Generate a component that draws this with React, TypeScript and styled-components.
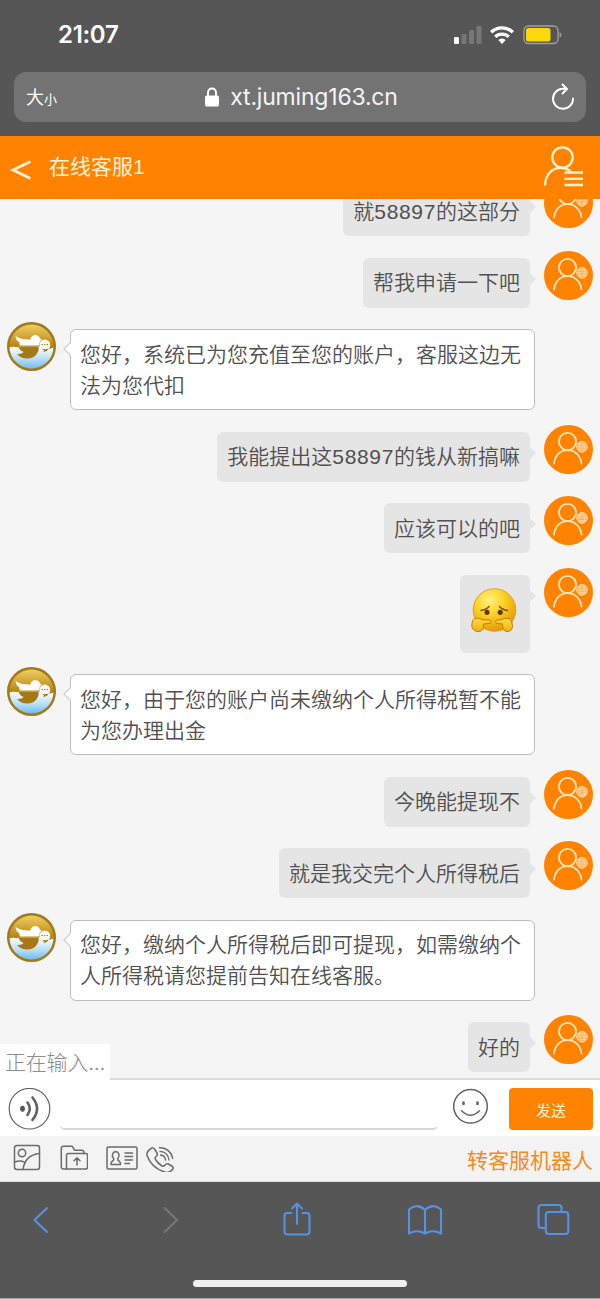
import React from "react";
import styled, { createGlobalStyle } from "styled-components";

const GlobalStyle = createGlobalStyle`
  * { box-sizing: border-box; }
  body { margin: 0; background: #565656; font-family: "Liberation Sans", "Noto Sans CJK SC", sans-serif; }
`;

const Screen = styled.div`
  display: flex;
  flex-direction: column;
  width: 600px;
  height: 1299px;
  overflow: hidden;
  background: #565656;
  border-bottom: 1px solid #a8a8a8;
`;

const StatusBar = styled.header`
  display: flex;
  align-items: center;
  flex: none;
  height: 72px;
  padding: 0 38px 3px 58px;
`;

const Clock = styled.time`
  flex: 1;
  padding-top: 1px;
  color: #fff;
  font: 600 24px/30px Inter, sans-serif;
  letter-spacing: -0.3px;
`;

const AddressBar = styled.div`
  display: flex;
  align-items: center;
  flex: none;
  height: 50px;
  margin: 0 14px 14px;
  padding: 0 11px 0 12px;
  border-radius: 12px;
  background: #737373;
  color: #fff;
`;

const TextSize = styled.span`
  width: 120px;
  font: 400 18px/30px "Noto Sans CJK SC", sans-serif;
  small { font-size: 13px; }
`;

const Address = styled.div`
  display: flex;
  flex: 1;
  justify-content: center;
  align-items: center;
  gap: 11px;
  padding-left: 2px;
  font: 400 23px/30px Inter, sans-serif;
  letter-spacing: -0.2px;
  color: #f4f4f4;
`;

const ReloadSlot = styled.span`
  display: flex;
  justify-content: flex-end;
  width: 120px;
`;

const TitleBar = styled.div`
  display: flex;
  align-items: center;
  flex: none;
  height: 63px;
  padding: 0 16px 1px 10px;
  background: #ff8300;
  color: #fff3dc;
`;

const Title = styled.h1`
  flex: 1;
  margin: 0 0 0 17px;
  font: 400 21px/30px "Liberation Sans", "Noto Sans CJK SC", sans-serif;
`;

const Messages = styled.main`
  display: flex;
  flex-direction: column;
  justify-content: flex-end;
  flex: none;
  gap: 14.5px;
  height: 879px;
  padding: 0 7px 6px;
  overflow: hidden;
  background: #f5f5f5;
`;

const Row = styled.div<{ $own?: boolean }>`
  display: flex;
  flex: none;
  flex-direction: ${(p) => (p.$own ? "row-reverse" : "row")};
  align-items: flex-start;
  gap: 14px;
`;

const Avatar = styled.svg`
  flex: none;
  width: 49px;
  height: 49px;
`;

const Bubble = styled.div<{ $own?: boolean }>`
  position: relative;
  margin-top: 7px;
  padding: ${(p) => (p.$own ? "9.5px 10px" : "8.5px 9px")};
  width: ${(p) => (p.$own ? "auto" : "465px")};
  border: ${(p) => (p.$own ? "none" : "1px solid #bdbdbd")};
  border-radius: 6px;
  background: ${(p) => (p.$own ? "#e5e5e5" : "#fff")};
  color: #505050;
  font: 350 21px/31px "Liberation Sans", "Noto Sans CJK SC", sans-serif;
`;

const Digits = styled.span`
  letter-spacing: 0.65px;
`;

const Pointer = styled.svg<{ $own?: boolean }>`
  position: absolute;
  top: ${(p) => (p.$own ? "13px" : "11px")};
  ${(p) => (p.$own ? "right: -6px;" : "left: -8px;")}
  width: 8px;
  height: 16px;
`;

const Emoji = styled.svg`
  display: block;
  width: 50px;
  height: 59px;
`;

const Composer = styled.div`
  position: relative;
  display: flex;
  flex: none;
  height: 58px;
  padding: 8px 7px 0 8px;
  border-top: 2px solid #dadada;
  background: #fff;
`;

const Typing = styled.div`
  position: absolute;
  left: 0;
  top: -36px;
  width: 110px;
  height: 38px;
  padding-left: 5px;
  background: #fff;
  color: #8c8c8c;
  font: 300 21px/37px "Liberation Sans", "Noto Sans CJK SC", sans-serif;
  letter-spacing: -0.2px;
  white-space: nowrap;
`;

const Input = styled.div`
  width: 378px;
  height: 42px;
  margin: 0 15px 0 9px;
  border-bottom: 2px solid #d8d8d8;
  border-radius: 5px;
`;

const SendButton = styled.button`
  width: 84px;
  height: 42px;
  margin-left: auto;
  padding: 2px 0 0;
  border: 0;
  border-radius: 4px;
  background: #ff8300;
  color: #fff3e0;
  font: 400 15px/20px "Noto Sans CJK SC", sans-serif;
`;

const Tools = styled.div`
  display: flex;
  align-items: flex-start;
  flex: none;
  height: 46px;
  padding: 8px 7px 0 13px;
  background: #f3f3f3;
  border-bottom: 1px solid #ddd;
`;

const Tool = styled.svg<{ $w: number; $gap?: number }>`
  width: ${(p) => p.$w}px;
  height: 28px;
  margin-right: ${(p) => p.$gap ?? 0}px;
  fill: none;
  stroke: #6b6b6b;
  stroke-width: 1.5;
  stroke-linecap: round;
  stroke-linejoin: round;
`;

const RobotLink = styled.a`
  margin: 0 0 0 auto;
  color: #f58a1f;
  font: 400 21px/30px "Noto Sans CJK SC", sans-serif;
`;

const BrowserBar = styled.nav`
  display: flex;
  justify-content: space-between;
  flex: none;
  height: 76px;
  padding: 18px 29px 0 23px;
`;

const NavIcon = styled.svg<{ $dim?: boolean }>`
  width: 36px;
  height: 38px;
  fill: none;
  stroke: ${(p) => (p.$dim ? "#777" : "#5791e2")};
  stroke-width: 2.1;
  stroke-linecap: round;
  stroke-linejoin: round;
`;

const HomeIndicator = styled.div`
  flex: none;
  width: 214px;
  height: 7px;
  margin: 22px 0 0 193px;
  border-radius: 4px;
  background: #f0f0f0;
`;

const Signal = () => (
  <svg width="30" height="20" viewBox="0 0 30 20">
    <rect x="1" y="12" width="5" height="7" rx="1.3" fill="#fff" />
    <rect x="8.5" y="9" width="5" height="10" rx="1.3" fill="#777" />
    <rect x="16" y="5" width="5" height="14" rx="1.3" fill="#777" />
    <rect x="23.5" y="1" width="5" height="18" rx="1.3" fill="#777" />
  </svg>
);

const WifiIcon = styled.svg`
  margin-left: 7px;
`;

const Wifi = () => (
  <WifiIcon width="24" height="20" viewBox="0 0 24 20" fill="none" stroke="#fff" strokeWidth="3.3">
    <path d="M1.2 7.3a15.4 15.4 0 0 1 21.6 0M5.3 11.8a9.5 9.5 0 0 1 13.4 0" />
    <path d="M8.3 15.1a5.3 5.3 0 0 1 7.4 0L12 19z" fill="#fff" stroke="none" />
  </WifiIcon>
);

const BatteryIcon = styled.svg`
  margin-left: 9px;
`;

const Battery = () => (
  <BatteryIcon width="39" height="20" viewBox="0 0 39 20">
    <rect x="1" y="1" width="34" height="17.5" rx="4.5" fill="none" stroke="#a0a0a0" strokeWidth="1.3" />
    <rect x="3" y="3" width="24.5" height="13.5" rx="2.5" fill="#fbd80b" />
    <path d="M36.5 7v6q2-.8 2-3t-2-3" fill="#999" />
  </BatteryIcon>
);

const BackIcon = styled.svg`
  margin-top: 5px;
`;

const OwnAvatar = () => (
  <Avatar viewBox="0 0 49 49">
    <circle cx="24.5" cy="24.5" r="24.5" fill="#ff8300" />
    <g fill="none" stroke="#ffe6bd" strokeWidth="1.8" strokeLinecap="round">
      <circle cx="23.5" cy="16.5" r="8.6" />
      <path d="M10 38.500C11 30.500 16 25.200 23.500 25.200S36.500 30.500 37.500 38.500" />
    </g>
    <circle cx="38" cy="21.800" r="5.600" fill="#ffb15c" />
    <g fill="none" stroke="#ffdcae" strokeWidth=".8">
      <circle cx="38" cy="21.800" r="5.300" />
      <ellipse cx="38" cy="21.800" rx="2.400" ry="5.300" />
      <path d="M32.700 21.800h10.600M33.500 19h9M33.500 24.600h9" />
    </g>
  </Avatar>
);

const AgentAvatar = () => (
  <Avatar viewBox="0 0 49 49">
    <defs>
      <linearGradient id="sky" x2="0" y2="1">
        <stop offset="0" stopColor="#f0cd62" />
        <stop offset=".5" stopColor="#b98410" />
      </linearGradient>
      <linearGradient id="sea" x2="0" y2="1">
        <stop offset="0" stopColor="#fff" />
        <stop offset=".5" stopColor="#b9dff7" />
        <stop offset="1" stopColor="#5fb3ee" />
      </linearGradient>
      <clipPath id="disc"><circle cx="24.500" cy="24.500" r="22" /></clipPath>
    </defs>
    <circle cx="24.500" cy="24.500" r="24.500" fill="#a07a1c" />
    <circle cx="24.500" cy="24.500" r="22" fill="url(#sky)" />
    <g clipPath="url(#disc)">
      <path d="M1 24.500q3 1.500 5.500 0 3 1.500 6 0h20l4 2q5 1.500 12-1.500v24H1z" fill="url(#sea)" />
      <path d="M11.500 24.500h20q1 3-1.500 7-3 5-10 5-6 0-10-4.500 5 .5 6.500-2-4-1.500-5-5.500" fill="#a77916" />
      <path d="M13 23.500q-1-1.500-.5-3Q9 18.500 8.500 14q6 4 15 3.500.5-4 4.500-4.500 4 .2 5 3.500l2 1.300-2 1.200q-.5 3-1.500 4.500z" fill="#fff" />
      <circle cx="37.800" cy="23" r="5.400" fill="#fff" />
      <g fill="#a77916"><circle cx="35.200" cy="22.500" r=".8" /><circle cx="37.800" cy="22.500" r=".8" /><circle cx="40.400" cy="22.500" r=".8" /></g>
      <path d="M34.500 26.500q3 1.500 7 0-1 3-5 3.500l.5-1.500z" fill="#a77916" />
    </g>
  </Avatar>
);

const SadFace = () => (
  <Emoji viewBox="0 1 50 59">
    <defs>
      <radialGradient id="face" cx=".38" cy=".26" r=".78">
        <stop offset="0" stopColor="#fff285" />
        <stop offset=".45" stopColor="#ffd022" />
        <stop offset="1" stopColor="#e0960c" />
      </radialGradient>
      <linearGradient id="hand" x2="0" y2="1">
        <stop offset="0" stopColor="#ffdc3c" />
        <stop offset="1" stopColor="#f3ae12" />
      </linearGradient>
    </defs>
    <circle cx="24.500" cy="27" r="21.300" fill="url(#face)" stroke="#dca22c" />
    <path d="M11 27.500q5-.5 8-4M37.500 27.500q-5-.5-8-4" fill="none" stroke="#7b500c" strokeWidth="1.400" strokeLinecap="round" />
    <ellipse cx="17" cy="29.300" rx="2.500" ry="2.600" fill="#563b10" />
    <ellipse cx="30.200" cy="29.300" rx="2.500" ry="2.600" fill="#563b10" />
    <g fill="url(#hand)" stroke="#bb8013" strokeWidth="1" strokeLinejoin="round">
      <path d="M4.500 35.500q4-1.500 8 1.300l7.500.2q2 1.500 0 3.300l-6.500.7q1 4.500-2.500 7-3 1.500-5.500 0Q1 46 2 40.500q0-3.500 2.500-5z" />
      <path d="M39 35.500q-4.500-1-8 1.300l-4.500.2q-2 1.500 0 3.300l6 .7q-.5 4.500 2.500 7 3 1.500 5.500-.5 3-2.500 1.500-7.500-.5-3-3-4.500z" />
    </g>
  </Emoji>
);

const OwnPointer = () => (
  <Pointer $own viewBox="0 0 8 16"><path d="M1 1l7 7-7 7z" fill="#e5e5e5" /></Pointer>
);

const AgentPointer = () => (
  <Pointer viewBox="0 0 8 16"><path d="M8 1L1 8l7 7" fill="#fff" stroke="#d2d2d2" strokeWidth="1.300" /></Pointer>
);

type Message = { own?: boolean; emoji?: boolean; text?: string };

const messages: Message[] = [
  { own: true, text: "就58897的这部分" },
  { own: true, text: "帮我申请一下吧" },
  { text: "您好，系统已为您充值至您的账户，客服这边无法为您代扣" },
  { own: true, text: "我能提出这58897的钱从新搞嘛" },
  { own: true, text: "应该可以的吧" },
  { own: true, emoji: true },
  { text: "您好，由于您的账户尚未缴纳个人所得税暂不能为您办理出金" },
  { own: true, text: "今晚能提现不" },
  { own: true, text: "就是我交完个人所得税后" },
  { text: "您好，缴纳个人所得税后即可提现，如需缴纳个人所得税请您提前告知在线客服。" },
  { own: true, text: "好的" },
];

const renderText = (text: string) =>
  text.split(/(\d+)/).map((part, i) => (/^\d/.test(part) ? <Digits key={i}>{part}</Digits> : part));

export default function App() {
  return (
    <>
      <GlobalStyle />
      <Screen>
        <StatusBar>
          <Clock>21:07</Clock>
          <Signal />
          <Wifi />
          <Battery />
        </StatusBar>
        <AddressBar>
          <TextSize>大<small>小</small></TextSize>
          <Address>
            <svg width="14" height="20" viewBox="0 0 14 20">
              <rect x="0" y="8.500" width="14" height="11" rx="1.800" fill="#fff" />
              <path d="M3 9V5.500a4 4 0 0 1 8 0V9" fill="none" stroke="#fff" strokeWidth="1.900" />
            </svg>
            xt.juming163.cn
          </Address>
          <ReloadSlot>
            <svg width="24" height="28" viewBox="0 0 24 28" fill="none" stroke="#fff" strokeWidth="1.900" strokeLinecap="round" strokeLinejoin="round">
              <path d="M22 15.500a10 10 0 1 1-10-9.700h4M11.500 1.500L16 6l-4.500 4.500" />
            </svg>
          </ReloadSlot>
        </AddressBar>
        <TitleBar>
          <BackIcon width="22" height="22" viewBox="0 0 22 22" fill="none" stroke="#fff3dc" strokeWidth="2.800">
            <path d="M20.500 2.500L3 11l17.500 8.500" />
          </BackIcon>
          <Title>在线客服1</Title>
          <svg width="42" height="42" viewBox="0 0 42 42" fill="none" stroke="#fff3d0" strokeWidth="2.300">
            <circle cx="20.500" cy="11.500" r="10.200" />
            <path d="M3 39.500C3.500 28.500 10 21.800 18.500 21.800q5 0 10 3M22.500 26.500H41M22.500 32.800H41M22.500 39H41" />
          </svg>
        </TitleBar>
        <Messages>
          {messages.map((m, i) => (
            <Row key={i} $own={m.own}>
              {m.own ? <OwnAvatar /> : <AgentAvatar />}
              <Bubble $own={m.own}>
                {m.emoji ? <SadFace /> : renderText(m.text ?? "")}
                {m.own ? <OwnPointer /> : <AgentPointer />}
              </Bubble>
            </Row>
          ))}
        </Messages>
        <Composer>
          <Typing>正在输入...</Typing>
          <svg width="43" height="42" viewBox="0 0 43 42" fill="none" stroke="#636363" strokeLinecap="round">
            <circle cx="21.500" cy="20.700" r="20.300" strokeWidth="1.200" />
            <ellipse cx="14.500" cy="20.700" rx="2.400" ry="3" fill="#555" stroke="none" />
            <path d="M19.500 14.500q4.500 6.200 0 12.400M24.500 9.500q9 11.200 0 22.400" strokeWidth="2.600" />
          </svg>
          <Input />
          <svg width="36" height="36" viewBox="0 0 36 36" fill="none" stroke="#646464" strokeWidth="1.500" strokeLinecap="round">
            <circle cx="17.500" cy="18.300" r="16.800" />
            <path d="M8.500 22.800q9 9 18 0" />
            <path d="M10.500 14.600v1.400M24.500 14.600v1.400" strokeWidth="2.600" />
          </svg>
          <SendButton>发送</SendButton>
        </Composer>
        <Tools>
          <Tool $w={28} $gap={19} viewBox="0 0 28 28">
            <rect x="1.500" y="1.500" width="25" height="24" rx="2.500" />
            <circle cx="9" cy="9" r="3.700" />
            <path d="M1.500 18q6.500-2 9.500 0M10 25.500C11.500 15 17 10.500 26.500 9.500" />
          </Tool>
          <Tool $w={28} $gap={18} viewBox="0 0.5 28 28">
            <path d="M6.500 25.500H3.500q-2.200 0-2.200-2.200V4.800q0-2 2-2h9l2.500 4h7q2 0 2 2V10" />
            <path d="M6.500 25.500V12q0-2 2-2h17q2 0 2 2v11.500q0 2-2 2z" />
            <path d="M17 21.500v-7M14 17.300l3-3 3 3" />
          </Tool>
          <Tool $w={32} $gap={8} viewBox="0 0.5 32 28">
            <rect x="1" y="3.500" width="30" height="22" rx="1.500" />
            <path d="M9.500 8a3.800 4 0 0 0-2 6.800q1 1.500-1.500 3-1 .8-1 3.200h9.500q0-2.400-1-3.200-2.500-1.500-1.500-3a3.800 4 0 0 0-2.500-6.800M19 9.500h7.500M19 13h7.500M19 16.500h7.500M19 20h4.500" />
          </Tool>
          <Tool $w={28} viewBox="0 -1 28 28">
            <path d="M5 3.500q2-1.500 3.500.5L11 8q1 2-1 3.500-1.500 1-.5 3 2.500 4 6.500 6.500 1.500.8 3-1t3.500-1l4 2.500q1.500 1.500 0 3-3.500 4-8 2.500C9.500 24 3.500 17.500 1 10.500.5 7 2.500 5 5 3.500z" />
            <path d="M14.500 10q4.500.5 5 5M14 6.300q8 .7 9 8.700M13.500 2.500q11.500 1 13.200 11" strokeWidth="1.300" />
          </Tool>
          <RobotLink>转客服机器人</RobotLink>
        </Tools>
        <BrowserBar>
          <NavIcon viewBox="0 0 36 38"><path d="M24 8L11.500 20 24 32" /></NavIcon>
          <NavIcon $dim viewBox="0 0 36 38"><path d="M13.500 8L26 20 13.500 32" /></NavIcon>
          <NavIcon viewBox="0 0 36 38"><path d="M12.500 13H8.500q-3 0-3 3v15.500q0 3 3 3h19q3 0 3-3V16q0-3-3-3h-4M18 24V3.500M13 8.500l5-5 5 5" /></NavIcon>
          <NavIcon viewBox="0 0 36 38"><path d="M18 10Q10 2.500 2 9.500v24q8-4.500 16 0 8-4.500 16 0v-24Q26 2.500 18 10zM18 10V33.500" /></NavIcon>
          <NavIcon viewBox="0 0 36 38"><path d="M10 28H6.500q-3 0-3-3V8q0-3 3-3h17q3 0 3 3v3.500" /><rect x="10.800" y="12" width="22.500" height="22" rx="3" /></NavIcon>
        </BrowserBar>
        <HomeIndicator />
      </Screen>
    </>
  );
}
